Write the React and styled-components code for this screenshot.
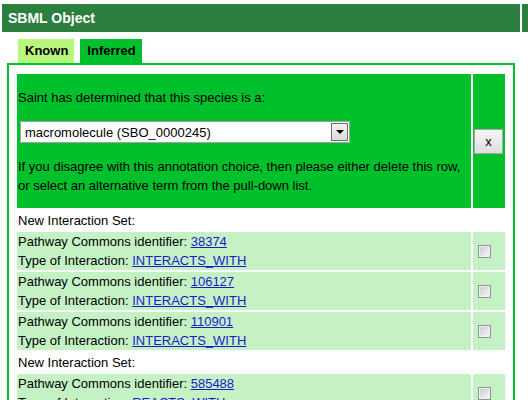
import styled, { createGlobalStyle } from "styled-components";

const GlobalStyle = createGlobalStyle`
  body {
    margin: 0;
    background: #fff;
    overflow: hidden;
  }
`;

const sets = [
  [
    { id: "38374", type: "INTERACTS_WITH" },
    { id: "106127", type: "INTERACTS_WITH" },
    { id: "110901", type: "INTERACTS_WITH" },
  ],
  [{ id: "585488", type: "REACTS_WITH" }],
];

const App = () => {
  return (
    <Page>
      <GlobalStyle />
      <Header>
        <HeaderTitle>SBML Object</HeaderTitle>
        <HeaderCap />
      </Header>
      <Tabs>
        <Tab>Known</Tab>
        <Tab $active>Inferred</Tab>
      </Tabs>
      <Panel>
        <Grid>
          <PromptCell>
            <div>Saint has determined that this species is a:</div>
            <Select>
              <span>macromolecule (SBO_0000245)</span>
              <Arrow />
            </Select>
            <div>
              If you disagree with this annotation choice, then please either
              delete this row, or select an alternative term from the
              pull-down list.
            </div>
          </PromptCell>
          <ActionCell>
            <XButton>x</XButton>
          </ActionCell>

          {sets.map((set, i) => (
            <SetGroup key={i}>
              <SetLabel>New Interaction Set:</SetLabel>
              {set.map((row) => (
                <SetGroup key={row.id}>
                  <InfoCell>
                    <div>
                      Pathway Commons identifier: <Link href="#">{row.id}</Link>
                    </div>
                    <div>
                      Type of Interaction: <Link href="#">{row.type}</Link>
                    </div>
                  </InfoCell>
                  <CheckCell>
                    <Check type="checkbox" />
                  </CheckCell>
                </SetGroup>
              ))}
            </SetGroup>
          ))}
        </Grid>
      </Panel>
    </Page>
  );
};

const Page = styled.div`
  padding: 4px 0 0 2px;
  height: 400px;
  box-sizing: border-box;
  font-family: "Liberation Sans", Arial, sans-serif;
  font-size: 13px;
  line-height: 19px;
  color: #000;
`;

const Header = styled.div`
  display: flex;
  gap: 2px;
  height: 28px;
`;

const HeaderTitle = styled.div`
  width: 518px;
  box-sizing: border-box;
  padding-left: 6px;
  display: flex;
  align-items: center;
  background: #2d7f3f;
  color: #fff;
  font-weight: bold;
  font-size: 14px;
`;

const HeaderCap = styled.div`
  flex: 1;
  background: #2d7f3f;
`;

const Tabs = styled.div`
  display: flex;
  gap: 6px;
  margin: 7px 0 0 16px;
`;

const Tab = styled.div`
  height: 24px;
  line-height: 24px;
  padding: 0 6px 0 7px;
  font-weight: bold;
  background: ${(p) => (p.$active ? "#00c12b" : "#b7f77e")};
`;

const Panel = styled.div`
  margin-left: 5px;
  width: 508px;
  height: 400px;
  box-sizing: border-box;
  border: 2px solid #00c12b;
  padding: 9px 8px 0 8px;
`;

const Grid = styled.div`
  display: grid;
  grid-template-columns: 454px 32px;
  gap: 2px;
`;

const SetGroup = styled.div`
  display: contents;
`;

const PromptCell = styled.div`
  background: #00c12b;
  padding: 14px 1px 13px;
`;

const Select = styled.div`
  margin: 14px 0 14px 2px;
  width: 330px;
  height: 22px;
  box-sizing: border-box;
  border: 1px solid #a3a3a3;
  background: #fff;
  display: flex;
  align-items: center;
  padding: 0 1px 0 4px;

  span {
    flex: 1;
  }
`;

const Arrow = styled.div`
  width: 17px;
  height: 18px;
  box-sizing: border-box;
  border: 1px solid #6e6e6e;
  background: linear-gradient(#f2f2f2, #dcdcdc);
  display: flex;
  align-items: center;
  justify-content: center;

  &::after {
    content: "";
    border-left: 4px solid transparent;
    border-right: 4px solid transparent;
    border-top: 4px solid #000;
  }
`;

const ActionCell = styled.div`
  background: #00c12b;
  display: flex;
  align-items: center;
  padding-left: 1px;
`;

const XButton = styled.button`
  width: 29px;
  height: 25px;
  padding: 0;
  border: 1px solid #a8a8a8;
  background: linear-gradient(#f6f6f6, #dddddd);
  font-family: "Liberation Sans", Arial, sans-serif;
  font-size: 13px;
  color: #000;
`;

const SetLabel = styled.div`
  grid-column: 1 / -1;
  height: 20px;
  box-sizing: border-box;
  padding: 1px 0 0 1px;
`;

const InfoCell = styled.div`
  background: #c5f2c5;
  padding-left: 1px;
`;

const CheckCell = styled.div`
  background: #c5f2c5;
  display: flex;
  align-items: center;
  padding-left: 5px;
`;

const Check = styled.input`
  appearance: none;
  width: 13px;
  height: 13px;
  margin: 0;
  border: 1px solid #939393;
  background: linear-gradient(135deg, #c8c8c8, #fbfbfb);
  box-shadow: inset 0 0 0 1px #f0f0f0;
`;

const Link = styled.a`
  color: #1a1acc;
  text-decoration: underline;
`;

export default App;
